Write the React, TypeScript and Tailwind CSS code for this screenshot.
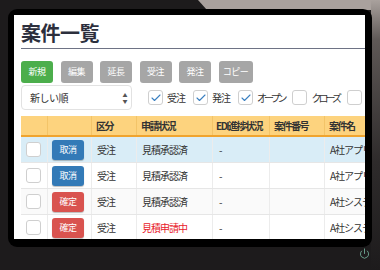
import { Check, Power } from "lucide-react";

const BUTTONS = [
  { label: "新規", on: true },
  { label: "編集" },
  { label: "延長" },
  { label: "受注" },
  { label: "発注" },
  { label: "コピー", wide: true },
];

const FILTERS = [
  { label: "受注", checked: true },
  { label: "発注", checked: true },
  { label: "オープン", checked: true, kana: true },
  { label: "クローズ", kana: true },
  { label: "他社" },
];

const ROWS = [
  { action: "取消", kind: "受注", status: "見積承認済", edi: "-", name: "A社アプリ開発", bg: "bg-[#d9edf7]" },
  { action: "取消", kind: "受注", status: "見積承認済", edi: "-", name: "A社アプリ開発", bg: "bg-white" },
  { action: "確定", kind: "受注", status: "見積承認済", edi: "-", name: "A社システム開発", bg: "bg-[#fafafa]" },
  { action: "確定", kind: "受注", status: "見積申請中", edi: "-", name: "A社システム開発", bg: "bg-white", alert: true },
];

const COLS = ["w-[27px]", "w-[44px]", "w-[45px]", "w-[76px]", "w-[57px]", "w-[55px]", "w-[90px]"];

function Box({ checked }: { checked?: boolean }) {
  return (
    <span className="flex h-[15px] w-[15px] shrink-0 items-center justify-center rounded-[3px] border border-[#cfcfcf] bg-white">
      {checked && <Check size={12} strokeWidth={2.2} className="text-[#3a7fc0]" />}
    </span>
  );
}

export default function App() {
  return (
    <div className="relative h-[270px] w-[380px] overflow-hidden bg-[#1d1b1c] pl-[8px] pr-[8px] pt-[9px] font-['Noto_Sans_CJK_JP','Noto_Sans',sans-serif]">
      {/* frame highlight */}
      <svg className="pointer-events-none absolute left-0 top-0" width="380" height="270">
        <defs>
          <linearGradient id="edge" x1="0" y1="0" x2="0" y2="1">
            <stop offset="0" stopColor="#a9a19d" />
            <stop offset="0.15" stopColor="#5e5856" />
            <stop offset="0.6" stopColor="#2e2b2b" />
            <stop offset="1" stopColor="#1d1b1c" />
          </linearGradient>
        </defs>
        <polygon points="198,0 380,0 380,10 207,10" fill="#a9a19d" />
        <rect x="371" y="0" width="9" height="270" fill="url(#edge)" />
      </svg>

      <div className="relative h-[238px] w-[364px] rounded-[9px] bg-black pb-[8px] pl-[6px] pr-[7px] pt-[6px]">
        <div className="h-[224px] w-[351px] overflow-hidden bg-white pl-[7px] pt-[6px]">
          <div className="border-b border-[#6e7385] pb-[3px]">
            <h1 className="text-[20px] font-bold leading-[24px] tracking-[-0.5px] text-[#2c2f3d]">案件一覧</h1>
          </div>

          <div className="mt-[12px] flex gap-[7.5px]">
            {BUTTONS.map((b) => (
              <div
                key={b.label}
                className={`flex h-[22px] items-center justify-center rounded-[3px] text-[9px] tracking-[-0.5px] text-white ${
                  b.wide ? "w-[34px]" : "w-[32px]"
                } ${b.on ? "bg-[#4cae4c]" : "bg-[#a6a6a6]"}`}
              >
                {b.label}
              </div>
            ))}
          </div>

          <div className="mt-[2px] flex items-center">
            <div className="flex h-[25px] w-[111px] shrink-0 items-center justify-between rounded-[4px] border border-[#e2e2e2] pl-[8px] pr-[4px] text-[10px] tracking-[-0.5px] text-[#333]">
              <span>新しい順</span>
              <span className="flex flex-col text-[5px] leading-[6px] text-[#555]">
                <span>▲</span>
                <span>▼</span>
              </span>
            </div>
            <div className="ml-[16px] flex items-center gap-[8px] whitespace-nowrap">
              {FILTERS.map((f) => (
                <div
                  key={f.label}
                  className={`flex items-center gap-[4px] text-[10px] text-[#333] ${
                    f.kana ? "tracking-[-3px]" : "tracking-[-1px]"
                  }`}
                >
                  <Box checked={f.checked} />
                  <span>{f.label}</span>
                </div>
              ))}
            </div>
          </div>

          <div className="mt-[6px] w-[420px] text-[10px] tracking-[-1px] text-[#333]">
            <div className="flex h-[21px] border-b-2 border-[#f0a42e] bg-[#fdd37e] font-bold tracking-[-1.5px]">
              {["", "", "区分", "申請状況", "EDI進捗状況", "案件番号", "案件名"].map((h, i) => (
                <div
                  key={i}
                  className={`${COLS[i]} flex shrink-0 items-center whitespace-nowrap border-r border-[#f3c468] ${
                    i === 4 ? "pl-[3px]" : "pl-[4px]"
                  }`}
                >
                  {h}
                </div>
              ))}
            </div>
            {ROWS.map((r, i) => (
              <div key={i} className={`flex h-[26px] border-b border-[#e6e6e6] ${r.bg}`}>
                <div className={`${COLS[0]} flex shrink-0 items-center border-r border-[#ececec] pl-[5px]`}>
                  <Box />
                </div>
                <div className={`${COLS[1]} flex shrink-0 items-center border-r border-[#ececec] pl-[4px]`}>
                  <div
                    className={`flex h-[20px] w-[32px] items-center justify-center rounded-[3px] text-[9px] tracking-[-0.5px] text-white shadow-[0_1px_1px_rgba(0,0,0,0.25)] ${
                      r.action === "取消" ? "bg-[#337ab7]" : "bg-[#d9534f]"
                    }`}
                  >
                    {r.action}
                  </div>
                </div>
                <div className={`${COLS[2]} flex shrink-0 items-center border-r border-[#ececec] pl-[5px]`}>{r.kind}</div>
                <div
                  className={`${COLS[3]} flex shrink-0 items-center border-r border-[#ececec] pl-[5px] ${
                    r.alert ? "text-[#e8202a]" : ""
                  }`}
                >
                  {r.status}
                </div>
                <div className={`${COLS[4]} flex shrink-0 items-center border-r border-[#ececec] pl-[6px]`}>{r.edi}</div>
                <div className={`${COLS[5]} flex shrink-0 items-center border-r border-[#ececec]`} />
                <div className={`${COLS[6]} flex shrink-0 items-center whitespace-nowrap pl-[5px]`}>{r.name}</div>
              </div>
            ))}
          </div>
        </div>
      </div>

      <div className="relative flex justify-end pr-[2px] pt-[1px]">
        <Power size={11} strokeWidth={2} className="text-[#6fa894]" />
      </div>
    </div>
  );
}
